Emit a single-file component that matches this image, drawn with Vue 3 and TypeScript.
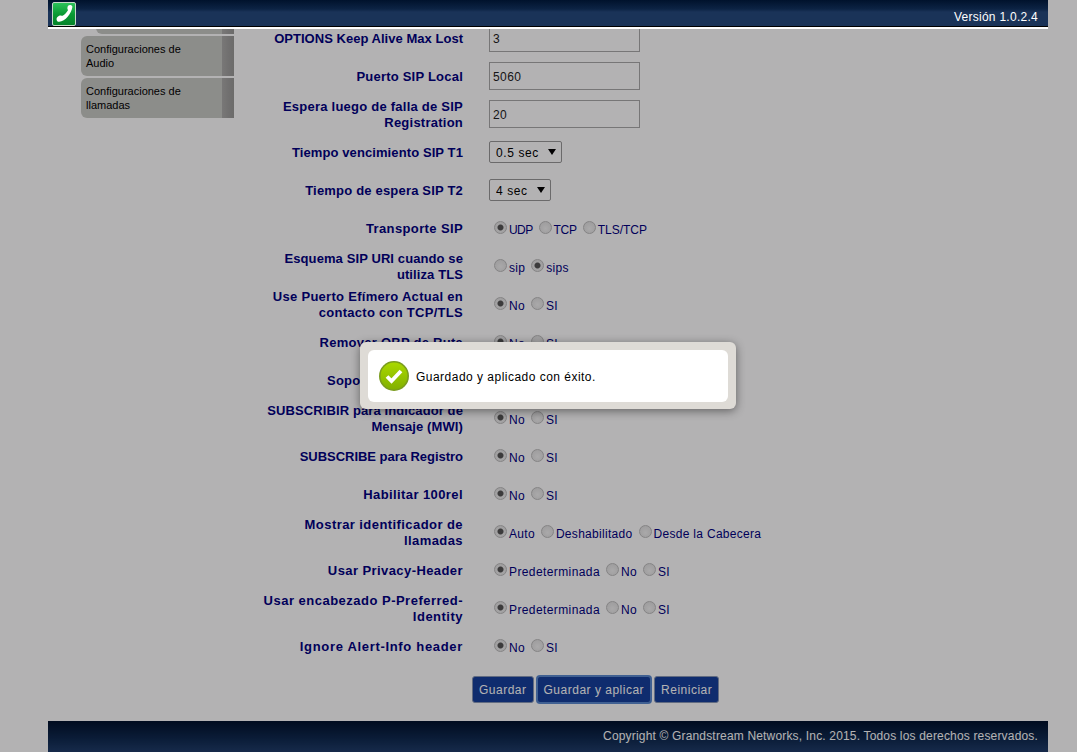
<script setup lang="ts">
interface Opt { text: string; on?: boolean; ls?: number }
interface Row { label: string; ls: number; kind: 'input' | 'select' | 'radio'; value?: string; cls?: string; opts?: Opt[] }
const noSi: Opt[] = [{ text: 'No', on: true }, { text: 'SI' }]
const predet: Opt[] = [{ text: 'Predeterminada', on: true, ls: 0.4 }, { text: 'No' }, { text: 'SI' }]
const rows: Row[] = [
  { label: 'OPTIONS Keep Alive Max Lost', ls: 0.03, kind: 'input', value: '3' },
  { label: 'Puerto SIP Local', ls: 0.22, kind: 'input', value: '5060' },
  { label: 'Espera luego de falla de SIP Registration', ls: 0.24, kind: 'input', value: '20' },
  { label: 'Tiempo vencimiento SIP T1', ls: 0.1, kind: 'select', value: '0.5 sec', cls: 'wide' },
  { label: 'Tiempo de espera SIP T2', ls: 0.19, kind: 'select', value: '4 sec', cls: 'narrow' },
  { label: 'Transporte SIP', ls: 0.38, kind: 'radio', opts: [{ text: 'UDP', on: true, ls: -0.6 }, { text: 'TCP', ls: -0.3 }, { text: 'TLS/TCP', ls: 0 }] },
  { label: 'Esquema SIP URI cuando se utiliza TLS', ls: 0.1, kind: 'radio', opts: [{ text: 'sip' }, { text: 'sips', on: true }] },
  { label: 'Use Puerto Efímero Actual en contacto con TCP/TLS', ls: 0.28, kind: 'radio', opts: noSi },
  { label: 'Remover OBP de Ruta', ls: 0.26, kind: 'radio', opts: noSi },
  { label: 'Soporte de SIP Timer', ls: 0.25, kind: 'radio', opts: noSi },
  { label: 'SUBSCRIBIR para Indicador de Mensaje (MWI)', ls: 0.1, kind: 'radio', opts: noSi },
  { label: 'SUBSCRIBE para Registro', ls: -0.03, kind: 'radio', opts: noSi },
  { label: 'Habilitar 100rel', ls: 0.41, kind: 'radio', opts: noSi },
  { label: 'Mostrar identificador de llamadas', ls: 0.43, kind: 'radio', opts: [{ text: 'Auto', on: true }, { text: 'Deshabilitado' }, { text: 'Desde la Cabecera' }] },
  { label: 'Usar Privacy-Header', ls: 0.42, kind: 'radio', opts: predet },
  { label: 'Usar encabezado P-Preferred-Identity', ls: 0.49, kind: 'radio', opts: predet },
  { label: 'Ignore Alert-Info header', ls: 0.68, kind: 'radio', opts: noSi },
]
const menu = ['Configuraciones de Audio', 'Configuraciones de llamadas']
</script>

<template>
  <div class="page">
    <header class="top">
      <div class="logo">
        <svg viewBox="0 0 24 24" width="21" height="21">
          <path d="M19.500 2.500c-2-.6-3.500.2-4 2-.4 1.500-.2 2.600.6 3.400-1.600 3-3.800 5.400-7 7-.9-.6-2-.7-3.200-.2-1.900.8-3 2.300-3 3.800 0 1.800 1.300 3 3 3 3.500-.3 7-2.500 9.700-5.700 2.800-3.300 4.900-7.600 5.400-11.300.1-1-.5-1.700-1.500-2z" fill="#fff"/>
        </svg>
      </div>
      <span class="version">Versión 1.0.2.4</span>
    </header>

    <main class="main">
      <nav class="side">
        <a class="side-item stub"></a>
        <a v-for="m in menu" :key="m" class="side-item">{{ m }}</a>
      </nav>
      <section class="content">
        <div v-for="r in rows" :key="r.label" class="row">
          <label class="name" :style="{ letterSpacing: r.ls + 'px' }">{{ r.label }}</label>
          <div class="field">
            <input v-if="r.kind === 'input'" class="text" type="text" :value="r.value" />
            <select v-else-if="r.kind === 'select'" class="sel" :class="r.cls">
              <option>{{ r.value }}</option>
            </select>
            <template v-else>
              <label v-for="o in r.opts" :key="o.text" class="opt">
                <input type="radio" class="radio" :name="r.label" :checked="o.on" />
                <span class="opt-text" :style="{ letterSpacing: (o.ls ?? 0.3) + 'px' }">{{ o.text }}</span>
              </label>
            </template>
          </div>
        </div>
        <div class="actions">
          <button class="btn" type="button">Guardar</button>
          <button class="btn focus" type="button">Guardar y aplicar</button>
          <button class="btn" type="button">Reiniciar</button>
        </div>
      </section>
    </main>

    <footer class="foot">Copyright © Grandstream Networks, Inc. 2015. Todos los derechos reservados.</footer>

    <div class="overlay"></div>
    <div class="dialog">
      <div class="dialog-in">
        <svg class="ok" viewBox="0 0 30 30" width="30" height="30">
          <defs>
            <linearGradient id="okg" x1="0" y1="0" x2="0" y2="1">
              <stop offset="0" stop-color="#a9d800" />
              <stop offset="1" stop-color="#82b000" />
            </linearGradient>
          </defs>
          <circle cx="15" cy="15" r="15" fill="#7a9c1e" />
          <circle cx="15" cy="15" r="13.400" fill="url(#okg)" />
          <path d="M8 15.500l4.500 4.500 9.500-10" fill="none" stroke="#fff" stroke-width="3.800" />
        </svg>
        <span class="msg">Guardado y aplicado con éxito.</span>
      </div>
    </div>
  </div>
</template>

<style>
html, body { margin: 0; background: #fff; }
</style>

<style scoped>
.page {
  height: 752px;
  box-sizing: border-box;
  padding-left: 48px;
  overflow: hidden;
  font-family: "Liberation Sans", Arial, sans-serif;
  font-size: 12px;
  position: relative;
  display: flex;
  flex-direction: column;
  align-items: flex-start;
}
.top {
  position: absolute;
  top: 0;
  left: 48px;
  width: 1000px;
  height: 27px;
  border-bottom: 2px solid #fff;
  box-shadow: inset 0 -1px 0 #000;
  background: linear-gradient(#00122c 0, #0c2344 9px, #1a3358 12px, #1a3358 100%);
  z-index: 20;
  display: flex;
  align-items: center;
  justify-content: space-between;
  color: #fff;
}
.logo {
  width: 22px;
  height: 22px;
  margin: 0 0 0 4px;
  border-radius: 2px;
  border: 1px solid #c4d8c8;
  background: linear-gradient(#2cc25a, #0a9a34 50%, #04842a);
  display: flex;
  align-items: center;
  justify-content: center;
}
.version { margin-right: 10px; padding-top: 6px; letter-spacing: .27px; }
.main {
  width: 1000px;
  height: 721px;
  flex: none;
  display: flex;
  background: #fff;
}
.side {
  width: 153px;
  margin: -6px 0 0 33px;
  flex: none;
  display: flex;
  flex-direction: column;
  gap: 2px;
}
.side-item {
  height: 40px;
  box-sizing: border-box;
  padding: 6px 40px 0 5px;
  color: #000;
  font-size: 11px;
  line-height: 14px;
  border-radius: 6px 0 0 6px;
  background: linear-gradient(270deg, #9a9a98 0, #a0a09e 5px, #acacaa 12px, #c8cac5 12px);
}
.stub { margin-left: 15px; }
.content {
  margin-left: 28px;
  padding-top: 19px;
  flex: 1;
}
.row {
  height: 38px;
  display: flex;
  align-items: center;
}
.name {
  width: 201px;
  margin-top: 2px;
  text-align: right;
  font-weight: bold;
  font-size: 13px;
  line-height: 16px;
  color: #000080;
}
.field {
  margin-left: 26px;
  display: flex;
  align-items: center;
  color: #000080;
  font-size: 12px;
}
.text {
  width: 151px;
  height: 28px;
  box-sizing: border-box;
  border: 1px solid #aaa;
  padding: 2px 3px 0;
  font: 12px "Liberation Sans", Arial, sans-serif;
  letter-spacing: .4px;
  color: #222;
  background: #fff;
  outline: none;
}
.sel {
  appearance: none;
  height: 22px;
  box-sizing: border-box;
  border: 1px solid #999;
  border-radius: 2px;
  padding: 1px 0 0 6px;
  font: 12px "Liberation Sans", Arial, sans-serif;
  letter-spacing: .6px;
  color: #000;
  background: #fff url("data:image/svg+xml,%3Csvg xmlns='http://www.w3.org/2000/svg' width='8' height='6'%3E%3Cpath d='M0 0h8L4 6z'/%3E%3C/svg%3E") no-repeat right 5px center;
}
.sel.wide { width: 73px; }
.sel.narrow { width: 62px; }
.opt {
  display: inline-flex;
  align-items: center;
  margin-left: 6px;
}
.opt:first-child { margin-left: 5px; }
.opt-text { margin-top: 3px; }
.radio {
  appearance: none;
  width: 13px;
  height: 13px;
  margin: -2px 2px 0 0;
  border-radius: 50%;
  border: 1px solid #bdbdbd;
  box-sizing: border-box;
  background: radial-gradient(circle at 50% 60%, #f2f2f2, #dcdcdc);
}
.radio:checked {
  background: radial-gradient(circle, #555 0 2.500px, transparent 3.500px), radial-gradient(circle at 50% 60%, #f2f2f2, #dcdcdc);
}
.actions {
  margin-top: 11px;
  display: flex;
  gap: 3px;
  padding-left: 210px;
}
.btn {
  height: 27px;
  padding: 0 6px;
  border: 1px solid #8a9ab8;
  border-radius: 3px;
  background: #15409c;
  color: #fff;
  font: 12px "Liberation Sans", Arial, sans-serif;
  letter-spacing: .5px;
}
.btn.focus { box-shadow: 0 0 0 1px #5b8ad0; border-color: #5b8ad0; }
.foot {
  width: 1000px;
  height: 31px;
  box-sizing: border-box;
  flex: none;
  padding: 8px 10px 0 0;
  text-align: right;
  color: #ffffff;
  letter-spacing: .17px;
  background: linear-gradient(#00122c 0, #0f2a50 18px, #1f3d6a 100%);
}
.overlay {
  position: absolute;
  inset: 0;
  background: rgba(4, 0, 4, .3);
  z-index: 10;
}
.dialog {
  position: absolute;
  left: 360px;
  top: 342px;
  width: 376px;
  height: 67px;
  box-sizing: border-box;
  padding: 8px;
  background: #dedbd6;
  border-radius: 6px;
  box-shadow: 0 2px 10px rgba(0, 0, 0, .45);
  z-index: 30;
}
.dialog-in {
  height: 52px;
  background: #fff;
  border-radius: 6px;
  display: flex;
  align-items: center;
  padding-left: 11px;
  gap: 7px;
  color: #000;
  letter-spacing: .48px;
}
.ok { flex: none; }
.msg { margin-top: 2px; }
</style>
